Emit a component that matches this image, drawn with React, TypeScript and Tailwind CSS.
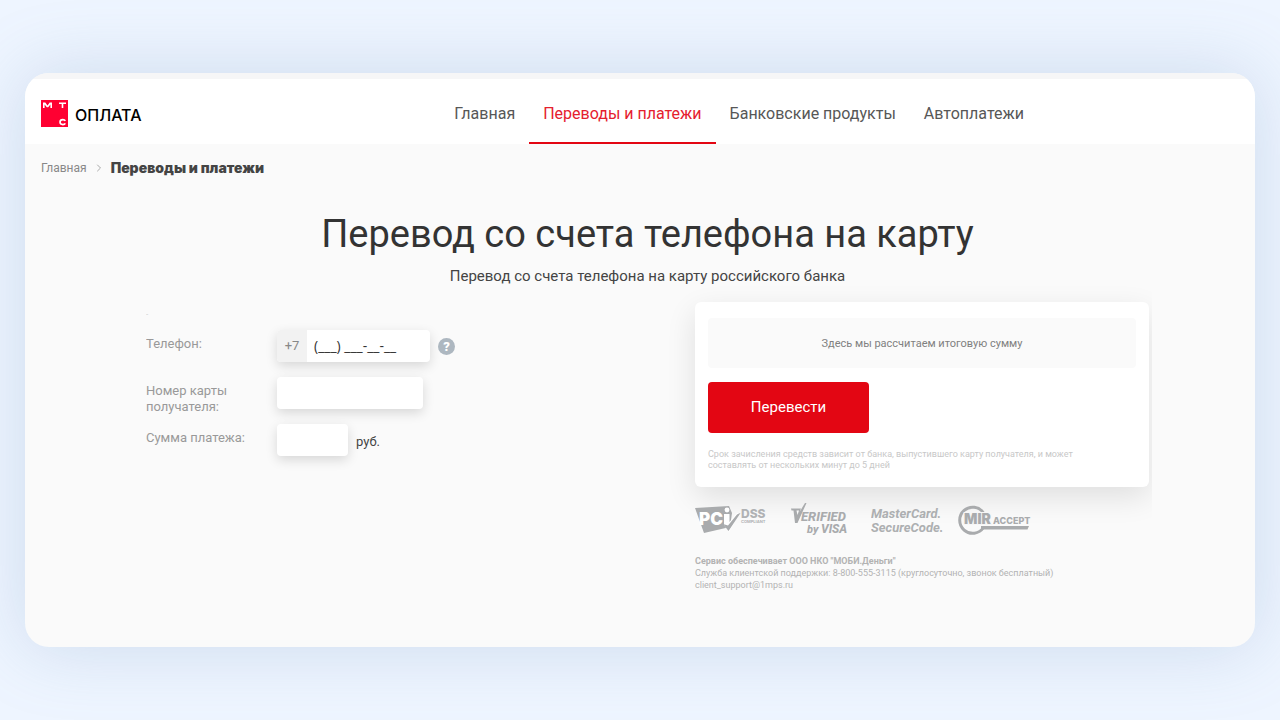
import { ChevronRight } from "lucide-react";

const NAV = [
  { label: "Главная", active: false },
  { label: "Переводы и платежи", active: true },
  { label: "Банковские продукты", active: false },
  { label: "Автоплатежи", active: false },
];

function MtsLogo() {
  return (
    <svg width="27" height="27" viewBox="0 0 27 27" role="img" aria-label="МТС">
      <rect width="27" height="27" fill="#ff0032" />
      <path d="M2 8V2.500H4.300L6.500 5.600L8.700 2.500H11V8H9.400V4.500L7.200 7.300H5.800L3.600 4.500V8Z" fill="#fff" />
      <path d="M18 2.500H25V4H22.300V8H20.700V4H18Z" fill="#fff" />
      <path
        d="M24.300 20.800C23.900 20 23 19.600 21.900 19.600C20.200 19.600 19 20.600 19 22.100C19 23.600 20.200 24.600 21.900 24.600C23 24.600 23.900 24.200 24.300 23.400"
        fill="none"
        stroke="#fff"
        strokeWidth="1.6"
      />
    </svg>
  );
}

function PciLogo() {
  return (
    <svg width="73" height="30" viewBox="0 0 73 30" role="img" aria-label="PCI DSS Compliant">
      <path d="M0 3L34 1L37 8L35 22L9 28Z" fill="#a9abad" />
      <g fontFamily="Inter, sans-serif">
        <text x="4" y="20" fontSize="17" fontWeight="900" fill="#fff">PC</text>
        <text x="46" y="13" fontSize="12" fontWeight="800" fill="#b0b2b4">DSS</text>
        <text x="46" y="18" fontSize="4" fontWeight="700" fill="#b0b2b4">COMPLIANT</text>
      </g>
      <circle cx="32" cy="5" r="2.4" fill="#fff" />
      <path d="M29 9H34.500V17L42 8H45L34 27L29 20Z" fill="#fff" />
      <path d="M28 19L33 20.500L42 9.500Q44 8 45.500 8L33.500 26Z" fill="#a9abad" />
    </svg>
  );
}

function VisaLogo() {
  return (
    <svg width="57" height="34" viewBox="0 0 57 34" role="img" aria-label="Verified by Visa">
      <path d="M0 5.500H10L8.500 9L14 0H15.500L6.500 20H4L2.500 7.500H0.500Z" fill="#a9abad" />
      <path d="M5.500 7.500H8L6.500 12Z" fill="#fafafa" />
      <g fontFamily="Roboto, sans-serif" fontWeight="800" fontStyle="italic" fill="#a9abad">
        <text x="10" y="18" fontSize="13">ERIFIED</text>
        <text x="16" y="30" fontSize="11">by</text>
        <text x="30" y="30" fontSize="12">VISA</text>
      </g>
    </svg>
  );
}

function MastercardLogo() {
  return (
    <svg width="74" height="30" viewBox="0 0 74 30" role="img" aria-label="MasterCard SecureCode">
      <g fontFamily="Roboto, sans-serif" fontWeight="700" fontStyle="italic" fontSize="13" fill="#adafb1">
        <text x="0" y="13">MasterCard.</text>
        <text x="0" y="27">SecureCode.</text>
      </g>
    </svg>
  );
}

function MirLogo() {
  return (
    <svg width="76" height="30" viewBox="0 0 76 30" role="img" aria-label="Mir Accept">
      <path d="M25.500 8A13 13 0 1 0 25.500 22.500" fill="none" stroke="#a9abad" strokeWidth="3" />
      <path d="M23 21H71L69.500 24.500H23Z" fill="#a9abad" />
      <g fontFamily="Inter, sans-serif" fill="#a9abad">
        <text x="6" y="19" fontSize="14" fontWeight="900" stroke="#f6f6f6" strokeWidth="2" paintOrder="stroke">MIR</text>
        <text x="35" y="19" fontSize="9" fontWeight="800">ACCEPT</text>
      </g>
    </svg>
  );
}

function Header() {
  return (
    <header className="flex bg-white px-4">
      <a href="#" className="flex w-1/3 items-center gap-[7px] pt-1">
        <MtsLogo />
        <span className="pt-[2px] font-[Inter,sans-serif] text-[16px] font-medium text-black">ОПЛАТА</span>
      </a>
      <nav className="flex">
        {NAV.map((item) => (
          <a
            key={item.label}
            href="#"
            className={
              item.active
                ? "flex h-[65px] items-center border-b-2 border-[#e30613] px-[14px] pt-[6px] text-[16px] text-[#e5202e]"
                : "flex h-[65px] items-center border-b-2 border-transparent px-[14px] pt-[6px] text-[16px] text-[#575757]"
            }
          >
            {item.label}
          </a>
        ))}
      </nav>
    </header>
  );
}

const field = "h-8 rounded bg-white shadow-[0_4px_12px_rgba(0,0,0,0.14)] outline-none";

function TransferForm() {
  return (
    <form id="transfer" className="flex flex-col gap-[15px] text-[13px] leading-4 text-[#999]">
      <p className="h-[13px] pt-2 text-[8px] leading-[10px] text-[#ccc]">-</p>
      <div className="flex items-start">
        <label htmlFor="phone" className="w-[131px] pt-[6px]">Телефон:</label>
        <div className="flex h-8 w-[153px] overflow-hidden rounded bg-white shadow-[0_4px_12px_rgba(0,0,0,0.14)]">
          <span className="flex w-[30px] items-center justify-center bg-[#f2f2f2] text-[#888]">+7</span>
          <input
            id="phone"
            type="tel"
            defaultValue="(___) ___-__-__"
            className="min-w-0 flex-1 px-[7px] font-[Open_Sans,sans-serif] text-[14px] text-[#333] outline-none"
          />
        </div>
        <button
          type="button"
          aria-label="Подсказка"
          className="ml-2 mt-2 flex size-[17px] items-center justify-center rounded-full bg-[#adb7c0] text-[13px] font-black text-white"
        >
          ?
        </button>
      </div>
      <div className="flex items-start">
        <label htmlFor="card" className="-mb-2 w-[131px] pr-8 pt-[6px]">Номер карты получателя:</label>
        <input id="card" className={`${field} w-[146px] px-2`} />
      </div>
      <div className="flex items-start">
        <label htmlFor="sum" className="w-[131px] pt-[6px]">Сумма платежа:</label>
        <input id="sum" className={`${field} w-[71px] px-2`} />
        <span className="pl-2 pt-[10px] text-[#444]">руб.</span>
      </div>
    </form>
  );
}

function Summary() {
  return (
    <div>
      <section className="rounded-md bg-white px-[13px] pb-4 pt-4 shadow-[0_10px_30px_rgba(0,0,0,0.11)]">
        <p className="flex h-[50px] items-center justify-center rounded bg-[#fafafa] pt-[2px] text-[11px] text-[#808080]">
          Здесь мы рассчитаем итоговую сумму
        </p>
        <button
          type="submit"
          form="transfer"
          className="mt-[14px] h-[51px] w-[161px] rounded bg-[#e30613] text-[15px] text-white"
        >
          Перевести
        </button>
        <p className="mt-4 text-[9px] leading-[11px] text-[#c8c8c8]">
          Срок зачисления средств зависит от банка, выпустившего карту получателя, и может
          <br />
          составлять от нескольких минут до 5 дней
        </p>
      </section>
      <div className="mt-4 flex items-center">
        <div className="w-24"><PciLogo /></div>
        <div className="w-20"><VisaLogo /></div>
        <div className="w-[87px]"><MastercardLogo /></div>
        <MirLogo />
      </div>
      <footer className="mt-[18px] text-[9px] leading-3 text-[#b3b3b3]">
        <p className="font-bold">Сервис обеспечивает ООО НКО "МОБИ.Деньги"</p>
        <p>Служба клиентской поддержки: 8-800-555-3115 (круглосуточно, звонок бесплатный)</p>
        <a href="mailto:client_support@1mps.ru" className="block">client_support@1mps.ru</a>
      </footer>
    </div>
  );
}

export default function App() {
  return (
    <div className="flex min-h-screen bg-[#eef5ff] px-[25px] py-[73px] font-[Roboto,sans-serif]">
      <div className="min-w-0 flex-1 overflow-hidden rounded-[24px] bg-[#fafafa] shadow-[0_0_70px_rgba(120,150,190,0.28)]">
        <div className="h-[6px] bg-[#f6f6f7]" />
        <Header />
        <div className="flex items-center gap-[6px] px-4 pt-4 leading-4">
          <a href="#" className="text-[12px] text-[#888]">Главная</a>
          <ChevronRight size={12} strokeWidth={2} className="text-[#aaa]" />
          <span className="font-[Inter,sans-serif] text-[14px] font-black text-[#444]">Переводы и платежи</span>
        </div>
        <main className="mx-auto max-w-[1024px] pl-[18px]">
          <div className="pr-[3px] text-center">
            <h1 className="pt-9 text-[38px] leading-[44px] text-[#333]">Перевод со счета телефона на карту</h1>
            <p className="pt-[10px] text-[15px] leading-5 text-[#444]">Перевод со счета телефона на карту российского банка</p>
          </div>
          <div className="mt-4 grid grid-cols-[1fr_454px] overflow-x-clip pr-[3px]">
            <TransferForm />
            <Summary />
          </div>
        </main>
      </div>
    </div>
  );
}
